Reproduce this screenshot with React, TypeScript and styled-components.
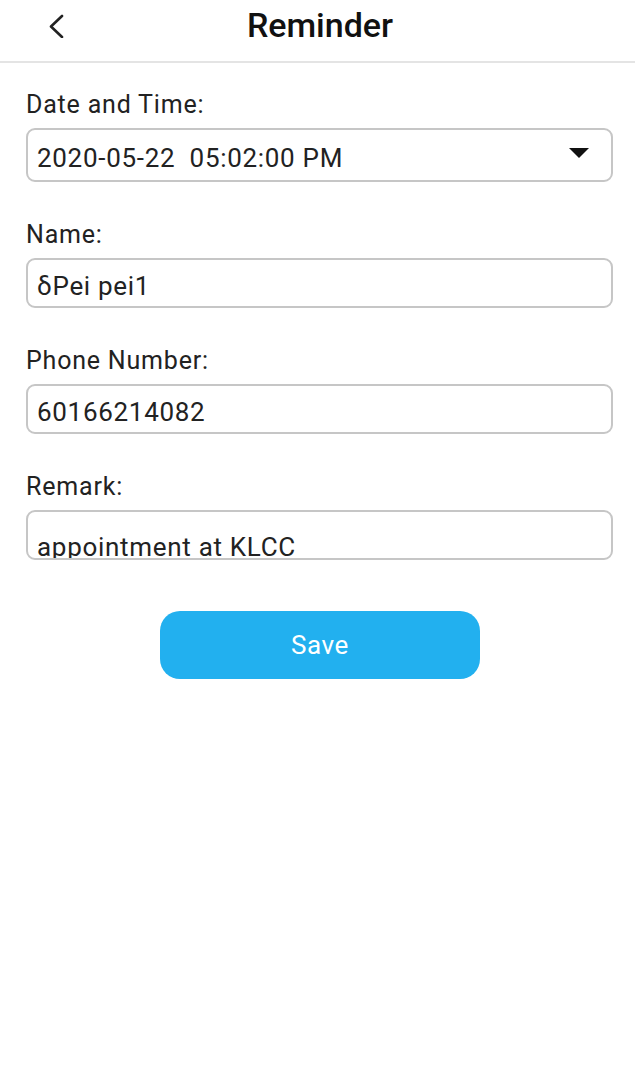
import React from "react";
import styled, { createGlobalStyle } from "styled-components";

const Global = createGlobalStyle`
  html, body { margin: 0; padding: 0; background: #fff; }
  body { font-family: Roboto, "Noto Sans", sans-serif; color: #222; }
  * { box-sizing: border-box; }
`;

const Page = styled.div`
  width: 635px;
  min-height: 1085px;
  background: #fff;
`;

const Header = styled.header`
  position: relative;
  height: 63px;
  display: flex;
  align-items: center;
  justify-content: center;
  border-bottom: 2px solid #e4e4e4;
`;

const BackButton = styled.button`
  position: absolute;
  left: 44px;
  top: 11px;
  width: 26px;
  height: 30px;
  padding: 0;
  border: none;
  background: none;
  display: flex;
  align-items: center;
  justify-content: center;
`;

const Title = styled.h1`
  margin: 0 0 12px 5px;
  font-size: 34px;
  font-weight: 500;
  color: #111;
  line-height: 40px;
`;

const Form = styled.div`
  padding: 28px 22px 0 26px;
  display: flex;
  flex-direction: column;
  gap: 39px;
`;

const Field = styled.div`
  display: flex;
  flex-direction: column;
  gap: 9px;
`;

const Label = styled.label`
  font-size: 25px;
  line-height: 28px;
  letter-spacing: 0.8px;
  color: #222;
`;

const Box = styled.div<{ $h: number; $top?: number }>`
  height: ${(p) => p.$h}px;
  border: 2px solid #c6c6c6;
  border-radius: 9px;
  padding: ${(p) => p.$top ?? 6}px 22px 0 9px;
  display: flex;
  align-items: ${(p) => (p.$top !== undefined ? "flex-start" : "center")};
  justify-content: space-between;
  overflow: hidden;
  font-size: 26px;
  line-height: 30px;
  letter-spacing: 0.7px;
  color: #222;
`;

const Caret = styled.span`
  width: 0;
  height: 0;
  border-left: 10px solid transparent;
  border-right: 10px solid transparent;
  border-top: 10px solid #111;
  margin-top: -10px;
`;

const Actions = styled.div`
  display: flex;
  justify-content: center;
  padding: 51px 0 0 5px;
`;

const SaveButton = styled.button`
  width: 320px;
  height: 68px;
  border: none;
  border-radius: 20px;
  background: #22b0ef;
  color: #fff;
  font-family: Roboto, sans-serif;
  font-size: 26px;
  font-weight: 400;
  letter-spacing: 0.6px;
`;

export default function App() {
  return (
    <Page>
      <Global />
      <Header>
        <BackButton aria-label="Back">
          <svg width="16" height="24" viewBox="0 0 16 24">
            <polyline
              points="13,2 2,12.5 13,23"
              fill="none"
              stroke="#222"
              strokeWidth="2.6"
              strokeLinecap="round"
              strokeLinejoin="round"
            />
          </svg>
        </BackButton>
        <Title>Reminder</Title>
      </Header>
      <Form>
        <Field>
          <Label>Date and Time:</Label>
          <Box $h={54}>
            <span>2020-05-22&nbsp;&nbsp;05:02:00 PM</span>
            <Caret />
          </Box>
        </Field>
        <Field>
          <Label>Name:</Label>
          <Box $h={50}>
            <span>δPei pei1</span>
          </Box>
        </Field>
        <Field>
          <Label>Phone Number:</Label>
          <Box $h={50}>
            <span>60166214082</span>
          </Box>
        </Field>
        <Field>
          <Label>Remark:</Label>
          <Box $h={50} $top={20}>
            <span>appointment at KLCC</span>
          </Box>
        </Field>
      </Form>
      <Actions>
        <SaveButton>Save</SaveButton>
      </Actions>
    </Page>
  );
}
